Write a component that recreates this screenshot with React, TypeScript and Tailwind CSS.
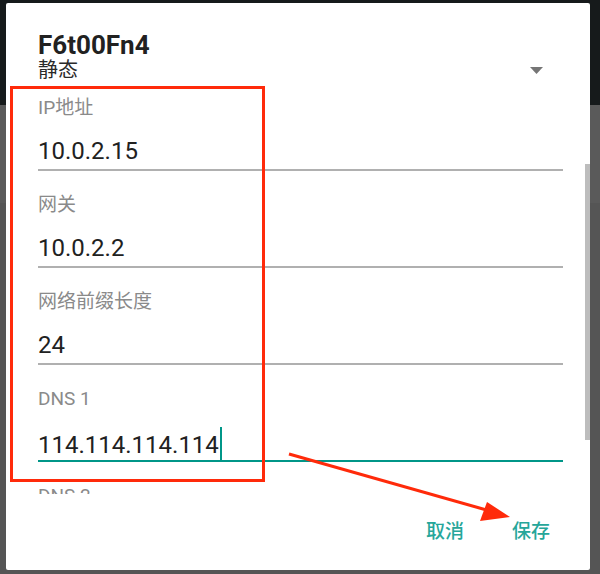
import React from "react";

const FIELDS = [
  { label: "IP地址", value: "10.0.2.15" },
  { label: "网关", value: "10.0.2.2" },
  { label: "网络前缀长度", value: "24" },
  { label: "DNS 1", value: "114.114.114.114", focused: true },
  { label: "DNS 2", value: "" },
];

export default function App() {
  return (
    <div className="relative w-[600px] h-[574px] overflow-hidden pl-[6px] pt-[3px] pr-[10px] pb-[4px] bg-[linear-gradient(to_bottom,#161a1b_0,#161a1b_105px,#5a5a5a_105px,#5a5a5a_203px,#555555_203px)] font-['Roboto','Noto_Sans_CJK_SC',sans-serif]">
      <div className="relative h-full bg-white rounded-[2px] flex flex-col">
        {/* header */}
        <div className="pt-[28px] pl-[32px] pr-[47px]">
          <div className="text-[26px] leading-[29px] font-bold text-[#212121]">F6t00Fn4</div>
          <div className="flex items-center justify-between">
            <span className="text-[20px] leading-[21px] text-[#2a2a2a]">静态</span>
            <svg width="13" height="7" viewBox="0 0 13 7">
              <path d="M0 0 L13 0 L6.5 7 Z" fill="#757575" />
            </svg>
          </div>
        </div>

        {/* fields */}
        <div className="h-[413px] overflow-hidden pt-[15px] pl-[32px] pr-[27px]">
          {FIELDS.map((f) => (
            <div key={f.label} className="mb-[22px]">
              <div className="text-[19px] leading-[24px] text-[#8a8a8a]">{f.label}</div>
              <div
                className={`mt-[16px] pb-[3px] border-b-2 ${
                  f.focused ? "border-[#009688]" : "border-[#b0b0b0]"
                }`}
              >
                <div className="h-[30px] text-[24px] leading-[30px] text-[#212121]">
                  {f.value}
                  {f.focused && (
                    <span className="inline-block w-[2px] h-[33px] ml-[1px] align-[-7px] bg-[#009688]" />
                  )}
                </div>
              </div>
            </div>
          ))}
        </div>

        {/* actions */}
        <div className="flex justify-end gap-[48px] pr-[40px] pt-[26px] text-[19px] leading-[24px] font-medium text-[#26a69a]">
          <button type="button">取消</button>
          <button type="button">保存</button>
        </div>

        {/* scrollbar thumb */}
        <div className="absolute right-0 top-[161px] w-[5px] h-[276px] bg-[#bdbdbd]" />
      </div>

      {/* red annotation */}
      <svg className="absolute inset-0 pointer-events-none" width="600" height="574" viewBox="0 0 600 574">
        <rect x="11.5" y="87.5" width="252" height="393" fill="none" stroke="#ff2a0a" strokeWidth="3" />
        <line x1="289" y1="454" x2="490" y2="511" stroke="#ff2a0a" strokeWidth="3" />
        <polygon points="487,502 480,521 510,517" fill="#ff2a0a" />
      </svg>
    </div>
  );
}
